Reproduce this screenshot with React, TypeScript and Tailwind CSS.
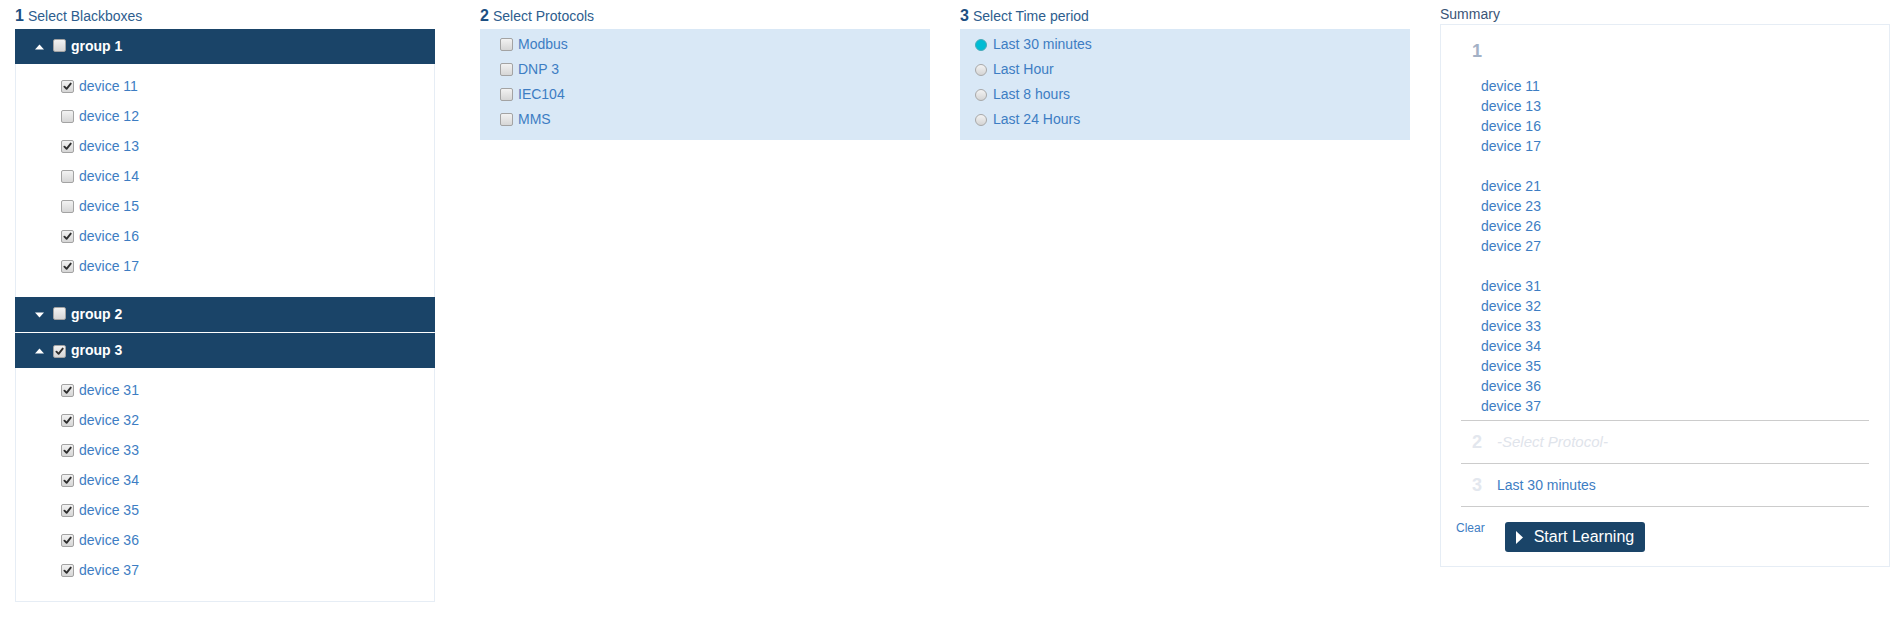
import React from "react";

const LINK = "text-[#3d7dc3]";

function Check({ checked }: { checked: boolean }) {
  return (
    <span className="inline-flex h-[13px] w-[13px] shrink-0 items-center justify-center rounded-[2px] border border-[#a3a3a3] bg-linear-to-b from-[#f2f2f2] to-[#d6d6d6]">
      {checked && (
        <svg viewBox="0 0 10 10" className="h-[9px] w-[9px]">
          <path d="M1.6 5.2 L4 7.6 L8.6 1.8" stroke="#2e2e2e" strokeWidth="2.1" fill="none" strokeLinecap="round" strokeLinejoin="round" />
        </svg>
      )}
    </span>
  );
}

function Radio({ checked }: { checked: boolean }) {
  return checked ? (
    <span className="inline-block h-[12px] w-[12px] shrink-0 rounded-full border border-[#4aaab8] bg-[#00bcd4]" />
  ) : (
    <span className="inline-block h-[12px] w-[12px] shrink-0 rounded-full border border-[#a8a8a8] bg-linear-to-b from-[#f3f3f3] to-[#d4d4d4]" />
  );
}

function Caret({ up }: { up: boolean }) {
  return (
    <svg width="9" height="6" viewBox="0 0 9 6" className="shrink-0">
      {up ? <polygon points="0,5.5 4.5,0.5 9,5.5" fill="#fff" /> : <polygon points="0,0.5 4.5,5.5 9,0.5" fill="#fff" />}
    </svg>
  );
}

function Title({ n, label }: { n: string; label: string }) {
  return (
    <div className="flex h-[29px] items-center pt-[3px]">
      <span className="text-[16px] font-bold text-[#1d4f82]">{n}</span>
      <span className="ml-[4px] text-[14px] text-[#2d5d8e]">{label}</span>
    </div>
  );
}

function GroupBar({ label, checked, up }: { label: string; checked: boolean; up: boolean }) {
  return (
    <div className="flex h-[35px] items-center bg-[#1a4468] pl-[20px]">
      <Caret up={up} />
      <span className="ml-[9px]">
        <Check checked={checked} />
      </span>
      <span className="ml-[5px] text-[14px] font-bold text-white">{label}</span>
    </div>
  );
}

function DeviceList({ items, last }: { items: [string, boolean][]; last?: boolean }) {
  return (
    <div className={"border-x border-[#e6edf5] pl-[45px] pt-[7px] " + (last ? "border-b pb-[16px]" : "pb-[16px]")}>
      {items.map(([name, c]) => (
        <div key={name} className="flex h-[30px] items-center gap-[5px]">
          <Check checked={c} />
          <span className={"text-[14px] " + LINK}>{name}</span>
        </div>
      ))}
    </div>
  );
}

export default function App() {
  const g1: [string, boolean][] = [
    ["device 11", true],
    ["device 12", false],
    ["device 13", true],
    ["device 14", false],
    ["device 15", false],
    ["device 16", true],
    ["device 17", true],
  ];
  const g3: [string, boolean][] = [31, 32, 33, 34, 35, 36, 37].map((n) => ["device " + n, true]);
  const protocols = ["Modbus", "DNP 3", "IEC104", "MMS"];
  const periods = ["Last 30 minutes", "Last Hour", "Last 8 hours", "Last 24 Hours"];
  const summary = [
    ["device 11", "device 13", "device 16", "device 17"],
    ["device 21", "device 23", "device 26", "device 27"],
    ["device 31", "device 32", "device 33", "device 34", "device 35", "device 36", "device 37"],
  ];

  return (
    <div className="flex min-h-[632px] items-start bg-white pl-[15px] font-['Liberation_Sans',Arial,sans-serif]">
      {/* Column 1 */}
      <div className="w-[420px]">
        <Title n="1" label="Select Blackboxes" />
        <GroupBar label="group 1" checked={false} up />
        <DeviceList items={g1} />
        <GroupBar label="group 2" checked={false} up={false} />
        <div className="h-px border-x border-[#e6edf5] bg-white" />
        <GroupBar label="group 3" checked up />
        <DeviceList items={g3} last />
      </div>

      {/* Column 2 */}
      <div className="ml-[45px] w-[450px]">
        <Title n="2" label="Select Protocols" />
        <div className="bg-[#d9e8f6] pb-[8px] pl-[20px] pt-[3px]">
          {protocols.map((p) => (
            <div key={p} className="flex h-[25px] items-center gap-[5px]">
              <Check checked={false} />
              <span className={"text-[14px] " + LINK}>{p}</span>
            </div>
          ))}
        </div>
      </div>

      {/* Column 3 */}
      <div className="ml-[30px] w-[450px]">
        <Title n="3" label="Select Time period" />
        <div className="bg-[#d9e8f6] pb-[8px] pl-[15px] pt-[3px]">
          {periods.map((p, i) => (
            <div key={p} className="flex h-[25px] items-center gap-[6px]">
              <Radio checked={i === 0} />
              <span className={"text-[14px] " + LINK}>{p}</span>
            </div>
          ))}
        </div>
      </div>

      {/* Column 4 */}
      <div className="ml-[30px] w-[450px]">
        <div className="h-[24px] pt-[4px] text-[14px] leading-[20px] text-[#3a5577]">Summary</div>
        <div className="border border-[#e6edf5] px-[20px] pb-[14px]">
          <div className="border-b border-[#cccccc] pb-[4px]">
            <div className="pl-[11px] pt-[16px] text-[18px] font-bold leading-[20px] text-[#a3b1c6]">1</div>
            <div className="mt-[15px] flex flex-col gap-[20px] pl-[20px]">
              {summary.map((g, i) => (
                <div key={i} className="flex flex-col">
                  {g.map((d) => (
                    <div key={d} className={"text-[14px] leading-[20px] " + LINK}>
                      {d}
                    </div>
                  ))}
                </div>
              ))}
            </div>
          </div>
          <div className="flex h-[43px] items-center border-b border-[#cccccc] pl-[11px]">
            <span className="w-[25px] text-[18px] font-bold text-[#e3e7ee]">2</span>
            <span className="text-[15px] italic text-[#dfe4eb]">-Select Protocol-</span>
          </div>
          <div className="flex h-[43px] items-center border-b border-[#cccccc] pl-[11px]">
            <span className="w-[25px] text-[18px] font-bold text-[#e3e7ee]">3</span>
            <span className={"text-[14px] " + LINK}>Last 30 minutes</span>
          </div>
          <div className="-ml-[5px] flex items-start pt-[13px]">
            <span className={"text-[12px] leading-[17px] " + LINK}>Clear</span>
            <button className="ml-[20px] mt-[2px] flex h-[30px] w-[140px] items-center rounded-[3px] bg-[#1a4468] pl-[11px] text-[16px] text-white">
              <svg width="7" height="13" viewBox="0 0 7 13" className="shrink-0">
                <polygon points="0,0 7,6.5 0,13" fill="#fff" />
              </svg>
              <span className="ml-[11px]">Start Learning</span>
            </button>
          </div>
        </div>
      </div>
    </div>
  );
}
